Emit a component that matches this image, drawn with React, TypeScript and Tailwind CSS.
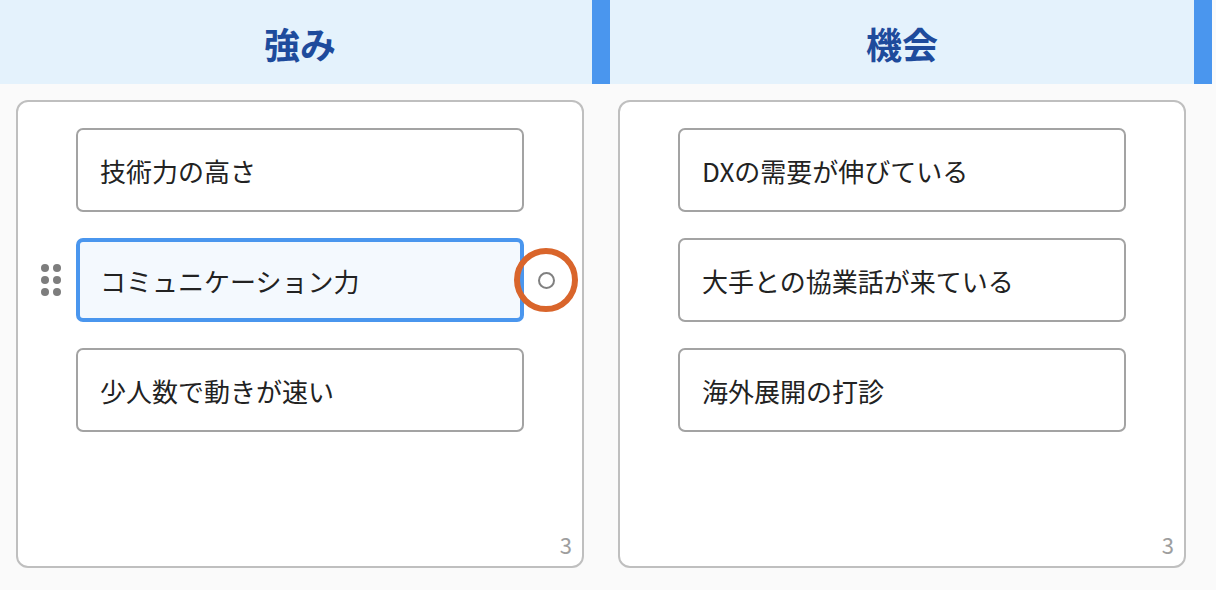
const font = { fontFamily: '"Noto Sans CJK JP", sans-serif' };

function Item({ label, active }: { label: string; active?: boolean }) {
  return (
    <div className="relative">
      <div
        className={
          active
            ? "flex h-[84px] items-center rounded-[7px] border-4 border-[#4a96ee] bg-[#f4f9fe] pl-[20px] text-[26px] text-[#222222]"
            : "flex h-[84px] items-center rounded-[7px] border-2 border-[#a3a3a3] bg-white pl-[22px] text-[26px] text-[#222222]"
        }
      >
        {label}
      </div>
      {active && (
        <>
          <div className="absolute left-[-35px] top-[26px] grid grid-cols-2 gap-[4px]">
            {[0, 1, 2, 3, 4, 5].map((i) => (
              <span key={i} className="h-[8px] w-[8px] rounded-full bg-[#7d7d7d]" />
            ))}
          </div>
          <div className="absolute left-[438px] top-[10px] flex h-[64px] w-[64px] items-center justify-center rounded-full border-[6px] border-[#d9652b]">
            <span className="h-[17px] w-[17px] rounded-full border-2 border-[#808080] bg-white" />
          </div>
        </>
      )}
    </div>
  );
}

function Column({ title, items, activeIndex, columnClass, headerClass, cardMargin }: { title: string; items: string[]; activeIndex?: number; columnClass: string; headerClass: string; cardMargin: string }) {
  return (
    <div className={`flex shrink-0 flex-col ${columnClass}`}>
      <div className={`flex h-[84px] items-center justify-center border-r-[18px] border-[#4a96ee] bg-[#e4f2fc] pt-[2px] text-[36px] font-bold text-[#1e4b9c] ${headerClass}`}>
        {title}
      </div>
      <div className={cardMargin}>
        <div className="relative flex h-[468px] w-[568px] flex-col gap-[26px] rounded-[12px] border-2 border-[#bfbfbf] bg-white pl-[58px] pt-[26px]">
          {items.map((t, i) => (
            <div key={t} className="w-[448px]">
              <Item label={t} active={i === activeIndex} />
            </div>
          ))}
          <span className="absolute bottom-[8px] right-[10px] text-[22px] leading-[28px] text-[#9e9e9e]">3</span>
        </div>
      </div>
    </div>
  );
}

export default function App() {
  return (
    <div className="flex h-[590px] w-[1216px] overflow-hidden bg-[#fafafa]" style={font}>
      <Column title="強み" items={["技術力の高さ", "コミュニケーション力", "少人数で動きが速い"]} activeIndex={1} columnClass="w-[610px]" headerClass="pl-[8px]" cardMargin="ml-[16px] mt-[16px]" />
      <Column title="機会" items={["DXの需要が伸びている", "大手との協業話が来ている", "海外展開の打診"]} columnClass="w-[602px]" headerClass="" cardMargin="ml-[8px] mt-[16px]" />
    </div>
  );
}
